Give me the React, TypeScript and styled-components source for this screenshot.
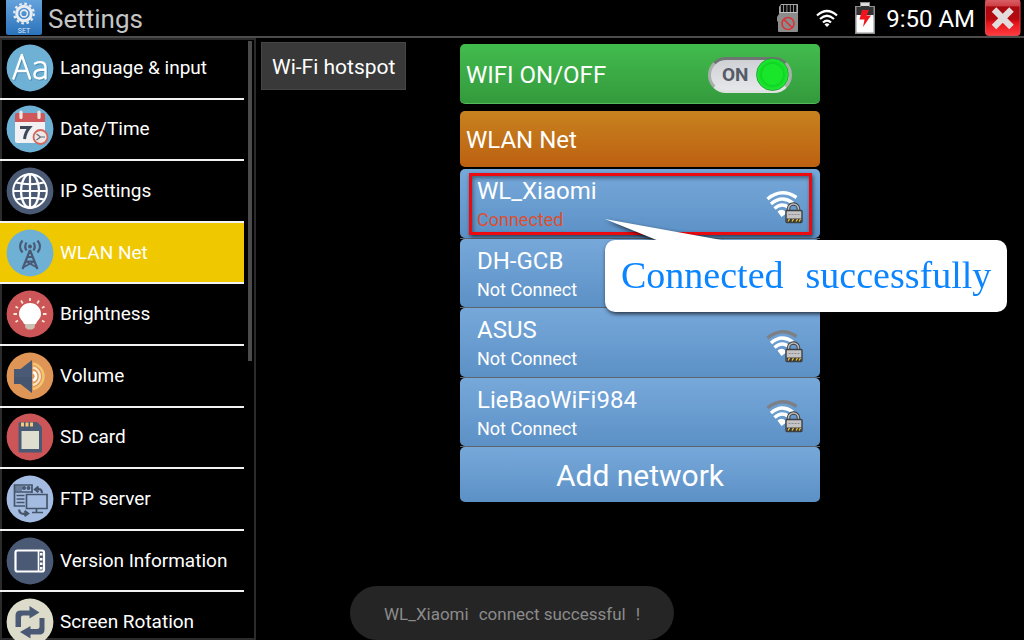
import React from "react";
import styled, { createGlobalStyle, css } from "styled-components";

const GlobalStyle = createGlobalStyle`
  * { box-sizing: border-box; }
  body { margin: 0; background: #000; color: #fff; font-family: Roboto, "Liberation Sans", sans-serif; }
  button { font: inherit; color: inherit; border: 0; padding: 0; background: none; cursor: pointer; }
  ul { list-style: none; margin: 0; padding: 0; }
  svg { display: block; flex: none; }
`;

const Page = styled.div`
  position: relative;
  display: flex;
  flex-direction: column;
  height: 100vh;
  overflow: hidden;
`;

const TopBar = styled.header`
  display: flex;
  align-items: center;
  flex: none;
  height: 38px;
  padding: 0 3px 0 6px;
  border-bottom: 2px solid #4c4c4c;
`;

const Title = styled.h1`
  flex: 1;
  margin: 0 0 0 6px;
  padding-top: 2px;
  font-size: 26px;
  line-height: 36px;
  font-weight: 400;
  color: #c4c4c4;
`;

const StatusArea = styled.div`
  display: flex;
  align-items: center;
  height: 38px;
`;

const StatusIcons = styled.div`
  display: flex;
  align-items: center;
  gap: 17px;
`;

const Clock = styled.time`
  margin: 0 10px 0 11px;
  padding-top: 2px;
  font-size: 24px;
  line-height: 36px;
`;

const CloseButton = styled.button`
  display: block;
  width: 36px;
  height: 36px;
`;

const Body = styled.div`
  display: flex;
  flex: 1;
  min-height: 0;
`;

const Sidebar = styled.nav`
  display: flex;
  justify-content: space-between;
  flex: none;
  width: 25%;
  padding-right: 4px;
  overflow: hidden;
  box-shadow: inset 0 0 0 2px #2b2b2b;
`;

const Menu = styled.ul`
  display: grid;
  grid-auto-rows: 1fr;
  flex: 1;
  height: 616px;
  margin-right: 4px;
`;

const MenuItem = styled.li<{ $active?: boolean }>`
  border-bottom: 2px solid #f2f2f2;
  ${(p) => p.$active && css`background: #efc800;`}
`;

const MenuButton = styled.button`
  display: flex;
  align-items: center;
  gap: 6px;
  width: 100%;
  height: 100%;
  padding-left: 6px;
  font-size: 19px;
  line-height: 24px;
  text-align: left;
`;

const ScrollThumb = styled.div`
  flex: none;
  width: 4px;
  height: 320px;
  margin-top: 3px;
  background: #4b4b4b;
`;

const Content = styled.main`
  display: grid;
  grid-template-columns: 1fr 360px 1fr;
  align-items: start;
  flex: 1;
`;

const HotspotButton = styled.button`
  justify-self: start;
  height: 48px;
  margin: 4px 0 0 5px;
  padding: 0 10px;
  border: 1px solid #464646;
  background: #393939;
  font-size: 21px;
  line-height: 48px;
`;

const Panel = styled.section`
  display: flex;
  flex-direction: column;
  padding-top: 6px;
`;

const WifiBar = styled.label`
  display: flex;
  align-items: center;
  justify-content: space-between;
  height: 60px;
  margin-bottom: 7px;
  padding: 2px 28px 0 6px;
  border-radius: 5px;
  border-bottom: 1px solid #55b95c;
  background: linear-gradient(#42bc4d, #349a3d);
  font-size: 24px;
  line-height: 32px;
`;

const Toggle = styled.span`
  display: grid;
  align-items: center;
  width: 84px;
  height: 36px;

  > * { grid-area: 1 / 1; }
`;

const ToggleInput = styled.input`
  appearance: none;
  display: flex;
  align-items: center;
  justify-content: flex-end;
  width: 84px;
  height: 36px;
  margin: 0;
  border: 3px solid #a9aeab;
  border-color: #6f7572 #a9b0ac #dfe3e0 #a9b0ac;
  border-radius: 18px;
  background: linear-gradient(#cfd1d6, #e6e7ea);

  &::before {
    content: "";
    flex: none;
    width: 31px;
    height: 31px;
    border: 1px solid #2aa135;
    border-radius: 50%;
    background: radial-gradient(circle, #19e62b 0 10px, #10d423 11px, #1bea30 15px);
  }

  &:not(:checked) { justify-content: flex-start; }
`;

const ToggleText = styled.span`
  padding-left: 14px;
  font-size: 19px;
  line-height: 24px;
  font-weight: 700;
  color: #565b66;
  pointer-events: none;
`;

const SectionTitle = styled.h2`
  height: 56px;
  margin: 0 0 2px;
  padding-left: 6px;
  border-radius: 5px;
  background: linear-gradient(#c7821f, #bd6011);
  font-size: 24px;
  line-height: 58px;
  font-weight: 400;
`;

const NetworkList = styled.ul`
  display: grid;
  grid-auto-rows: 1fr;
  height: 278px;
`;

const NetworkItem = styled.li`
  position: relative;
  display: flex;
  border-bottom: 1px solid #5d646b;
`;

const blueFace = css`
  border-radius: 5px;
  background: linear-gradient(#77a8da, #5c91c6);
`;

const NetworkButton = styled.button`
  ${blueFace}
  display: flex;
  align-items: center;
  justify-content: space-between;
  flex: 1;
  padding: 8px 16px 0 17px;
  text-align: left;
`;

const NetworkName = styled.span`
  display: block;
  margin-top: -6px;
  font-size: 24px;
  line-height: 32px;
`;

const NetworkState = styled.span<{ $connected?: boolean }>`
  display: block;
  font-size: 18px;
  line-height: 26px;
  color: ${(p) => (p.$connected ? "#dc4f32" : "#fff")};
`;

const Highlight = styled.div`
  position: absolute;
  inset: 4px 8px 3px 9px;
  border: 3px solid #ea0a10;
  box-shadow: 1px 2px 4px rgba(0, 0, 0, 0.6), inset 1px 2px 4px rgba(0, 0, 0, 0.45);
  pointer-events: none;
`;

const AddButton = styled.button`
  ${blueFace}
  height: 55px;
  padding-top: 2px;
  font-size: 30px;
  line-height: 53px;
`;

const Callout = styled.div`
  position: absolute;
  z-index: 2;
  top: 50px;
  left: 145px;
  filter: drop-shadow(1px 2px 2px rgba(0, 0, 0, 0.7));
`;

const CalloutBox = styled.div`
  display: flex;
  gap: 22px;
  height: 72px;
  margin-top: -1px;
  padding: 0 16px;
  border-radius: 10px;
  background: #fff;
  font-family: "Liberation Serif", serif;
  font-size: 38px;
  line-height: 70px;
  color: #0a84ff;
`;

const Toast = styled.div`
  position: absolute;
  bottom: 0;
  left: 50%;
  transform: translateX(-50%);
  display: flex;
  gap: 10px;
  height: 54px;
  padding: 0 34px;
  border-radius: 27px;
  background: #252525;
  font-size: 17px;
  line-height: 56px;
  color: #8b8b8b;
  white-space: nowrap;
`;

function Disc({ fill, children }: { fill: string; children: React.ReactNode }) {
  return (
    <svg width="48" height="48" viewBox="0 0 48 48" aria-hidden="true">
      <circle cx="24" cy="24" r="23.4" fill={fill} />
      {children}
    </svg>
  );
}

const navy = "#4a5a75";

const LanguageIcon = () => (
  <Disc fill="#6fb0d5">
    <g fill="none" stroke="#4f8fb4" strokeWidth="2.4" strokeLinecap="round" strokeLinejoin="round" transform="translate(1 1)">
      <path d="M7.500 34.500 15.800 11 24 34.500M10.500 27H21" />
      <path d="M29 19.500C34 17 39.500 18 39.500 23V34.500M39.500 25.500C33 25.500 28.500 26 28.500 30.500S35 36 39.500 31.500" />
    </g>
    <g fill="none" stroke="#fff" strokeWidth="2.400" strokeLinecap="round" strokeLinejoin="round">
      <path d="M7.500 34.500 15.800 11 24 34.500M10.500 27H21" />
      <path d="M29 19.500C34 17 39.500 18 39.500 23V34.500M39.500 25.500C33 25.500 28.500 26 28.500 30.500S35 36 39.500 31.500" />
    </g>
  </Disc>
);

const DateIcon = () => (
  <Disc fill="#6fb0d5">
    <path d="M9 16H39V36a2 2 0 0 1-2 2H11a2 2 0 0 1-2-2z" fill="#f1f0f3" />
    <path d="M9 17V10a2 2 0 0 1 2-2H37a2 2 0 0 1 2 2V17z" fill="#cf5659" />
    <path d="M15 7V12.500M33 7V12.500" stroke="#eee6dc" strokeWidth="3.200" strokeLinecap="round" />
    <path d="M14 22.500H23.500C20.500 26 19 29.500 18.500 34" fill="none" stroke="#3d4859" strokeWidth="3" />
    <circle cx="34.500" cy="32" r="7" fill="#eee7e5" stroke="#d3665f" strokeWidth="1.800" />
    <path d="M30.500 29 34.500 32H39M34.500 32 30.500 35" fill="none" stroke="#636a74" strokeWidth="1.200" />
  </Disc>
);

const GlobeIcon = () => (
  <Disc fill={navy}>
    <g fill="none" stroke="#fff" strokeWidth="2.200">
      <circle cx="24" cy="24" r="16.800" strokeWidth="2" />
      <ellipse cx="24" cy="24" rx="9" ry="16.800" />
      <path d="M24 7V41M7 24H41M10 15.500Q24 19 38 15.500M10 32.500Q24 29 38 32.500" />
    </g>
  </Disc>
);

const TowerIcon = () => (
  <Disc fill="#6fb0d5">
    <circle cx="24" cy="17.500" r="2" fill={navy} />
    <g fill="none" stroke={navy} strokeWidth="2.200">
      <path d="M24 21 16.500 40M24 21 31.500 40M21.500 28H26.500M20 32.500H28" />
      <path d="M28 32.500 18 38M20 32.500 30 38" strokeWidth="1.600" />
      <path d="M20.500 13.500Q18 17.500 20.500 21.500M27.500 13.500Q30 17.500 27.500 21.500M16.500 11.500Q11.500 17.500 16.500 23.500M31.500 11.500Q36.500 17.500 31.500 23.500" />
    </g>
  </Disc>
);

const BulbIcon = () => (
  <Disc fill="#cb5557">
    <path d="M18.500 32H29.500L28.500 38 26 39.500H22L19.500 38z" fill="#cbc1b2" />
    <path d="M13 24a11 11 0 1 1 22 0c0 5-4 6-5 10H18c-1-4-5-5-5-10z" fill="#fff" />
    <path d="M24 8V11M15 10.500 16.800 13.500M33 10.500 31.200 13.500M9.500 16.500 12 18M38.500 16.500 36 18M7.500 24H11M37 24H40.500M9.500 32 12 30.500M38.500 32 36 30.500" stroke="#f3e8d2" strokeWidth="1.800" />
  </Disc>
);

const VolumeIcon = () => (
  <Disc fill="#df9555">
    <path d="M8 17H14.500L26 8V41L14.500 32H8z" fill={navy} />
    <path d="M8 25H26V41L14.500 32H8z" fill="#3f4e68" opacity=".4" />
    <g fill="none">
      <path d="M27 11.500A13 13 0 0 1 27 37" stroke="#f5c575" strokeWidth="2.400" />
      <path d="M27 15.500A9 9 0 0 1 27 33" stroke="#f6e4c5" strokeWidth="2.400" />
      <path d="M27 20A4.500 4.500 0 0 1 27 28.500" stroke="#fff" strokeWidth="2.600" />
    </g>
  </Disc>
);

const CardIcon = () => (
  <Disc fill="#cb5557">
    <path d="M14 9H31L36 14V38a1.500 1.500 0 0 1-1.500 1.500H14A1.500 1.500 0 0 1 12.500 38V10.500A1.500 1.500 0 0 1 14 9z" fill={navy} />
    <path d="M15 9.500h3v4h-3zM19.500 9.500h3v4h-3zM24 9.500h3v4h-3z" fill="#f6c878" />
    <path d="M15.500 18H33V36H15.500z" fill="#dfdfd0" />
  </Disc>
);

const FtpIcon = () => (
  <Disc fill="#a5bce2">
    <g fill="none" stroke="#45566b" strokeWidth="1.700">
      <path d="M8.500 10H26V17H8.500zM8.500 17.500V31H19M26 17V18M10.500 20.500H18.500M10.500 24H18.500M10.500 27.500H18.500" />
      <circle cx="18" cy="13" r="1.200" />
      <circle cx="22.500" cy="13" r="1.200" />
      <path d="M20.500 19.500H41V33.500H20.500z" fill="#a5bce2" />
      <path d="M30.500 34V37M26 37.500H37" />
      <path d="M30 14.500C34 13.500 36 14.500 36 18M32.500 11.500 29 14.500 32.500 17M13 34.500C13.500 38.500 16 39.500 21 38.500M18.500 36 22 38.500 18.500 41" strokeWidth="2.200" />
    </g>
    <path d="M9 10.500H16V16.500H9z" fill="#45566b" opacity=".6" />
  </Disc>
);

const VersionIcon = () => (
  <Disc fill={navy}>
    <rect x="9.500" y="13.500" width="28.500" height="21" rx="2" fill="none" stroke="#fff" strokeWidth="2.200" />
    <path d="M32.500 14V34" stroke="#fff" strokeWidth="1.600" />
    <path d="M35.200 16v2.500M35.200 21v2.500M35.200 25.500v2.500M35.200 30v2.500" stroke="#fff" strokeWidth="2.600" />
  </Disc>
);

const RotateIcon = () => (
  <Disc fill="#dddccb">
    <g fill={navy}>
      <path d="M9.500 29V17.500Q9.500 12.500 14.500 12.500H23.500V8L33.500 14.500 23.500 20.500V17.500H17Q15 17.500 15 19.500V29z" />
      <path d="M38.500 20V31.500Q38.500 36.500 33.500 36.500H24.500V40.500L14 34 24.500 28V31H31Q33.500 31 33.500 29V20z" />
    </g>
  </Disc>
);

const SettingsLogo = () => (
  <svg width="36" height="36" viewBox="0 0 36 36" aria-hidden="true">
    <defs>
      <linearGradient id="logo" x2="0" y2="1">
        <stop stopColor="#65a2dc" />
        <stop offset="1" stopColor="#2b73ba" />
      </linearGradient>
    </defs>
    <path d="M0 0H36V33a2 2 0 0 1-2 2H2a2 2 0 0 1-2-2z" fill="url(#logo)" />
    <circle cx="18" cy="13.500" r="9.800" fill="none" stroke="#e9edf1" strokeWidth="2.200" strokeDasharray="2.600 2.530" />
    <circle cx="18" cy="13.500" r="7.300" fill="none" stroke="#e9edf1" strokeWidth="3" />
    <circle cx="18" cy="13.500" r="3.400" fill="none" stroke="#e9edf1" strokeWidth="1.600" />
    <text x="18" y="32.500" textAnchor="middle" fontFamily="Roboto" fontSize="7" fill="#d8e8f8">SET</text>
  </svg>
);

const SdStatus = () => (
  <svg width="22" height="30" viewBox="0 0 22 30" aria-label="SD card">
    <path d="M4 1H21V28a1 1 0 0 1-1 1H2a1 1 0 0 1-1-1V19L0 18V14L2 11V4z" fill="#8c8c8c" />
    <path d="M4 1.500H20.500V10H2.500V4z" fill="#c4c4c4" />
    <path d="M5 2V9M8.300 2V9M11.600 2V9M14.900 2V9M18.200 2V9" stroke="#0a0a0a" strokeWidth="2.600" />
    <circle cx="11" cy="20.500" r="6" fill="none" stroke="#d8343b" strokeWidth="1.700" />
    <path d="M7 16.500 15 24.500" stroke="#d8343b" strokeWidth="1.700" />
  </svg>
);

const WifiStatus = () => (
  <svg width="22" height="19" viewBox="0 0 22 19" aria-label="Wi-Fi">
    <g fill="none" stroke="#fff" strokeWidth="2.200">
      <path d="M1 6.500Q11-2.500 21 6.500M4 10Q11 3.500 18 10M7 13.500Q11 9.500 15 13.500" />
    </g>
    <path d="M8.500 15.500Q11 13 13.500 15.500L11 18z" fill="#fff" />
  </svg>
);

const BatteryStatus = () => (
  <svg width="20" height="32" viewBox="0 0 20 32" aria-label="Battery charging">
    <path d="M5 0H15V4H20V32H0V4H5z" fill="#8d8d8d" />
    <path d="M6 1H14V5H18.500V15H1.500V5H6z" fill="#333" />
    <path d="M6 1H14V4H6z" fill="#ddd" />
    <path d="M1.500 13H18.500V30.500H1.500z" fill="#fff" />
    <path d="M7 8H14L11.500 13.500H16L8 25 9.500 17.500H4.500z" fill="#f1141c" />
  </svg>
);

const CloseIcon = () => (
  <svg width="36" height="36" viewBox="0 0 36 36" aria-hidden="true">
    <defs>
      <linearGradient id="close" x2="0" y2="1">
        <stop stopColor="#d9646a" />
        <stop offset=".18" stopColor="#cf4248" />
        <stop offset=".22" stopColor="#a80a10" />
        <stop offset=".55" stopColor="#b5090f" />
        <stop offset=".65" stopColor="#e3141b" />
        <stop offset="1" stopColor="#ff3b40" />
      </linearGradient>
    </defs>
    <rect x=".5" y="-1" width="34.500" height="36.500" rx="3" fill="url(#close)" stroke="#d94a4f" />
    <path d="M9 9.500 26.500 27M26.500 9.500 9 27" stroke="#e2dcdc" strokeWidth="6.400" />
  </svg>
);

const SignalIcon = ({ full }: { full?: boolean }) => (
  <svg width="38" height="34" viewBox="0 0 38 34" aria-hidden="true">
    <g fill="none" strokeWidth="3.400">
      <path d="M1.500 9Q15.500-2.500 30.500 7.500" stroke={full ? "#fff" : "#7d8187"} />
      <path d="M5 14Q15.500 4.500 27 13" stroke="#fff" />
      <path d="M8.500 18.500Q15.500 12.500 22 17" stroke="#fff" />
    </g>
    <path d="M11.500 21.500Q15.500 18 19.500 21.500V24L15.500 27z" fill="#fff" />
    <path d="M22.500 22V19a5 5 0 0 1 10 0V22" fill="none" stroke="#3d3f42" strokeWidth="3.600" />
    <path d="M22.500 22V19a5 5 0 0 1 10 0V22" fill="none" stroke="#bcbcbc" strokeWidth="1.600" />
    <rect x="20" y="20.500" width="16" height="12" rx="1" fill="#c4c4c6" stroke="#3d3f42" strokeWidth="1.400" />
    <path d="M22.500 24.500H33.500" stroke="#8d8d90" strokeDasharray="2 1" />
    <path d="M20.500 28.500H35.500V32H20.500z" fill="#38383a" />
    <path d="M22 31.500l1.500-2.500M26 31.500l1.500-2.500M30 31.500l1.500-2.500M33 31.500l1.500-2.500" stroke="#e8c53a" strokeWidth="1.400" />
  </svg>
);

const menu = [
  { label: "Language & input", Icon: LanguageIcon },
  { label: "Date/Time", Icon: DateIcon },
  { label: "IP Settings", Icon: GlobeIcon },
  { label: "WLAN Net", Icon: TowerIcon, active: true },
  { label: "Brightness", Icon: BulbIcon },
  { label: "Volume", Icon: VolumeIcon },
  { label: "SD card", Icon: CardIcon },
  { label: "FTP server", Icon: FtpIcon },
  { label: "Version Information", Icon: VersionIcon },
  { label: "Screen Rotation", Icon: RotateIcon },
];

const networks = [
  { name: "WL_Xiaomi", connected: true },
  { name: "DH-GCB" },
  { name: "ASUS" },
  { name: "LieBaoWiFi984" },
];

export default function App() {
  return (
    <>
      <GlobalStyle />
      <Page>
        <TopBar>
          <SettingsLogo />
          <Title>Settings</Title>
          <StatusArea>
            <StatusIcons>
              <SdStatus />
              <WifiStatus />
              <BatteryStatus />
            </StatusIcons>
            <Clock>9:50 AM</Clock>
            <CloseButton aria-label="Close">
              <CloseIcon />
            </CloseButton>
          </StatusArea>
        </TopBar>
        <Body>
          <Sidebar>
            <Menu>
              {menu.map(({ label, Icon, active }) => (
                <MenuItem key={label} $active={active}>
                  <MenuButton>
                    <Icon />
                    {label}
                  </MenuButton>
                </MenuItem>
              ))}
            </Menu>
            <ScrollThumb />
          </Sidebar>
          <Content>
            <HotspotButton>Wi-Fi hotspot</HotspotButton>
            <Panel>
              <WifiBar>
                WIFI ON/OFF
                <Toggle>
                  <ToggleInput type="checkbox" role="switch" defaultChecked />
                  <ToggleText>ON</ToggleText>
                </Toggle>
              </WifiBar>
              <SectionTitle>WLAN Net</SectionTitle>
              <NetworkList>
                {networks.map(({ name, connected }) => (
                  <NetworkItem key={name}>
                    <NetworkButton>
                      <span>
                        <NetworkName>{name}</NetworkName>
                        <NetworkState $connected={connected}>
                          {connected ? "Connected" : "Not Connect"}
                        </NetworkState>
                      </span>
                      <SignalIcon full={connected} />
                    </NetworkButton>
                    {connected && (
                      <>
                        <Highlight />
                        <Callout role="status">
                          <svg width="124" height="22" viewBox="0 0 124 22" aria-hidden="true">
                            <path d="M0 0 122 22H54z" fill="#fff" />
                          </svg>
                          <CalloutBox>
                            <span>Connected</span>
                            <span>successfully</span>
                          </CalloutBox>
                        </Callout>
                      </>
                    )}
                  </NetworkItem>
                ))}
              </NetworkList>
              <AddButton>Add network</AddButton>
            </Panel>
          </Content>
        </Body>
        <Toast role="status">
          <span>WL_Xiaomi</span>
          <span>connect successful</span>
          <span>!</span>
        </Toast>
      </Page>
    </>
  );
}
